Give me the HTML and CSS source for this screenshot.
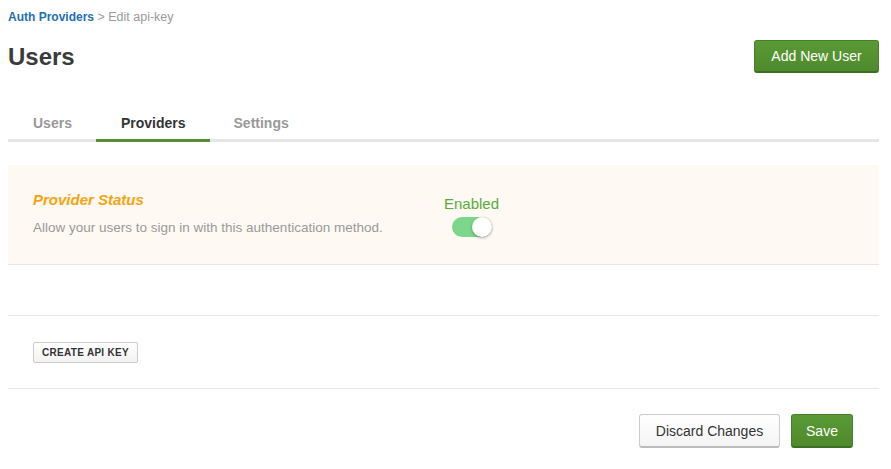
FILE: index.html
```html
<!DOCTYPE html>
<html>
<head>
<meta charset="utf-8">
<link rel="stylesheet" href="styles.css">
</head>
<body>
<div class="page">
  <div class="breadcrumb"><a class="crumb-link">Auth Providers</a> &gt; Edit api-key</div>
  <div class="header">
    <h1 class="title">Users</h1>
    <button class="btn btn-green btn-add">Add New User</button>
  </div>
  <div class="tabs">
    <div class="tab">Users</div>
    <div class="tab active">Providers</div>
    <div class="tab">Settings</div>
  </div>
  <div class="status-panel">
    <div class="status-text">
      <div class="status-title">Provider Status</div>
      <div class="status-desc">Allow your users to sign in with this authentication method.</div>
    </div>
    <div class="status-toggle">
      <div class="enabled-label">Enabled</div>
      <div class="toggle"><div class="knob"></div></div>
    </div>
  </div>
  <div class="spacer"></div>
  <div class="key-section">
    <button class="btn-small">CREATE API KEY</button>
  </div>
  <div class="footer">
    <button class="btn btn-white">Discard Changes</button>
    <button class="btn btn-green btn-save">Save</button>
  </div>
</div>
</body>
</html>
```
FILE: styles.css
```css
* { box-sizing: border-box; }
body {
  margin: 0;
  font-family: "Liberation Sans", Arial, sans-serif;
  background: #fff;
  color: #333;
}
.page {
  padding: 8px 12px 0 8px;
}
.breadcrumb {
  font-size: 12.5px;
  line-height: 18px;
  color: #999;
}
.crumb-link {
  color: #1f6fb4;
  font-weight: bold;
  font-size: 12px;
}
.header {
  display: flex;
  justify-content: space-between;
  align-items: center;
  margin-top: 14px;
  height: 32px;
}
.title {
  margin: 0;
  font-size: 24px;
  font-weight: bold;
  color: #3a3a3a;
  position: relative;
  top: 1px;
}
.btn {
  font-family: "Liberation Sans", Arial, sans-serif;
  font-size: 14px;
  border-radius: 3px;
  cursor: pointer;
}
.btn-green {
  background: linear-gradient(#5a9a36, #4f8a2c);
  color: #fff;
  border: 1px solid #47802a;
  border-bottom: 2px solid #3d6e24;
}
.btn-add {
  width: 125px;
  height: 33px;
}
.tabs {
  display: flex;
  margin-top: 35px;
  border-bottom: 3px solid #e6e6e6;
}
.tab {
  font-size: 14px;
  font-weight: bold;
  color: #999;
  line-height: 31px;
  padding: 1px 24px 0 25px;
}
.tab:nth-child(2) { padding: 1px 24px 0 25px; }
.tab:nth-child(3) { padding: 1px 24px 0 24px; }
.tab.active {
  color: #333;
  border-bottom: 3px solid #558e33;
  margin-bottom: -3px;
}
.status-panel {
  margin-top: 23px;
  background: #fef9f3;
  border-bottom: 1px solid #e6e6e6;
  height: 100px;
  display: flex;
  padding: 26px 0 0 25px;
}
.status-text {
  width: 411px;
}
.status-title {
  font-size: 15px;
  font-weight: bold;
  font-style: italic;
  color: #f5a40f;
  line-height: 18px;
}
.status-desc {
  margin-top: 11px;
  font-size: 13.5px;
  color: #999;
  line-height: 16px;
}
.status-toggle {
  display: flex;
  flex-direction: column;
  align-items: center;
  padding-top: 4px;
}
.enabled-label {
  font-size: 15px;
  color: #5aaa3c;
  line-height: 18px;
}
.toggle {
  margin-top: 4px;
  width: 40px;
  height: 20px;
  border-radius: 10px;
  background: #7cd68b;
  position: relative;
}
.knob {
  position: absolute;
  right: 0;
  top: 0;
  width: 20px;
  height: 20px;
  border-radius: 50%;
  background: #fff;
  box-shadow: 0 1px 3px rgba(0,0,0,0.35);
}
.spacer {
  height: 51px;
  border-bottom: 1px solid #e6e6e6;
}
.key-section {
  height: 73px;
  border-bottom: 1px solid #e6e6e6;
  padding: 26px 0 0 25px;
}
.btn-small {
  font-family: "Liberation Sans", Arial, sans-serif;
  font-size: 10px;
  font-weight: bold;
  color: #333;
  background: linear-gradient(#fff, #f2f2f2);
  border: 1px solid #ccc;
  border-radius: 2px;
  height: 21px;
  width: 105px;
  padding: 0;
  letter-spacing: 0.3px;
}
.footer {
  display: flex;
  justify-content: flex-end;
  gap: 11px;
  margin-top: 25px;
  padding-right: 26px;
}
.btn-white {
  background: linear-gradient(#fff, #f4f4f4);
  border: 1px solid #ccc;
  border-bottom: 2px solid #bbb;
  color: #333;
  width: 141px;
  height: 34px;
}
.btn-save {
  width: 62px;
  height: 34px;
}
```
